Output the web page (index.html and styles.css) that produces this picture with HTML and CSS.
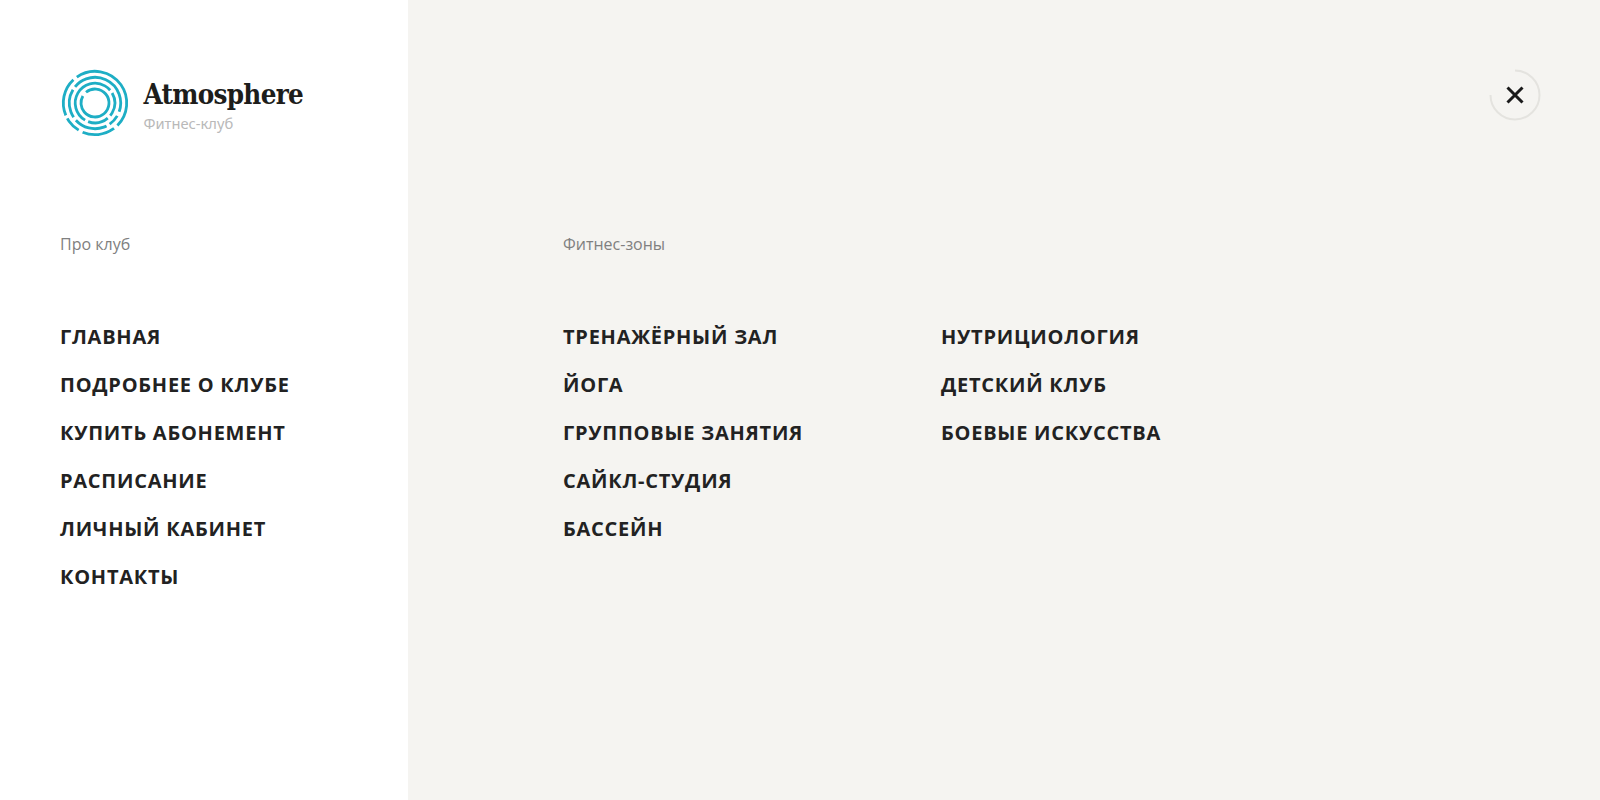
FILE: index.html
```html
<!DOCTYPE html>
<html lang="ru">
<head>
<meta charset="utf-8">
<title>Atmosphere</title>
<link rel="stylesheet" href="styles.css">
</head>
<body>
<div class="page">
  <aside class="side">
    <a class="logo">
      <svg class="logo-mark" width="70" height="70" viewBox="0 0 70 70" fill="none" stroke="#1eaec5" stroke-width="2.8">
        <circle cx="35" cy="35" r="31.7" pathLength="360" stroke-dasharray="170 8 60 8 30 6 70 8" transform="rotate(235 35 35)"/>
        <circle cx="35" cy="35" r="25.7" pathLength="360" stroke-dasharray="130 10 25 8 75 8 65 8 31 0" transform="rotate(250 35 35)"/>
        <circle cx="35" cy="35" r="19.8" pathLength="360" stroke-dasharray="110 10 70 10 60 10 90 0" transform="rotate(210 35 35)"/>
        <circle cx="35" cy="35" r="14" pathLength="360" stroke-dasharray="340 20" transform="rotate(230 35 35)"/>
      </svg>
      <span class="logo-text">
        <span class="logo-name">Atmosphere</span>
        <span class="logo-sub">Фитнес-клуб</span>
      </span>
    </a>
    <nav class="menu">
      <h2 class="menu-title">Про клуб</h2>
      <ul class="menu-list">
        <li>ГЛАВНАЯ</li>
        <li>ПОДРОБНЕЕ О КЛУБЕ</li>
        <li>КУПИТЬ АБОНЕМЕНТ</li>
        <li>РАСПИСАНИЕ</li>
        <li>ЛИЧНЫЙ КАБИНЕТ</li>
        <li>КОНТАКТЫ</li>
      </ul>
    </nav>
  </aside>
  <main class="main">
    <div class="topbar">
      <button class="close" aria-label="Закрыть">
        <svg width="54" height="54" viewBox="0 0 54 54" fill="none">
          <path d="M2.5 27A24.5 24.5 0 1 0 27 2.5" stroke="#e4e3df" stroke-width="2"/>
          <path d="M19.5 19.5L34.5 34.5M34.5 19.5L19.5 34.5" stroke="#1a1a1a" stroke-width="3"/>
        </svg>
      </button>
    </div>
    <nav class="menu">
      <h2 class="menu-title">Фитнес-зоны</h2>
      <div class="zones">
        <ul class="menu-list">
          <li>ТРЕНАЖЁРНЫЙ ЗАЛ</li>
          <li>ЙОГА</li>
          <li>ГРУППОВЫЕ ЗАНЯТИЯ</li>
          <li>САЙКЛ-СТУДИЯ</li>
          <li>БАССЕЙН</li>
        </ul>
        <ul class="menu-list">
          <li>НУТРИЦИОЛОГИЯ</li>
          <li>ДЕТСКИЙ КЛУБ</li>
          <li>БОЕВЫЕ ИСКУССТВА</li>
        </ul>
      </div>
    </nav>
  </main>
</div>
</body>
</html>
```

FILE: styles.css
```css
* { box-sizing: border-box; }
html, body { margin: 0; padding: 0; }
body { font-family: "Open Sans", sans-serif; background: #fff; color: #222; }
.page { display: flex; width: 1600px; height: 800px; overflow: hidden; }
.side { width: 408px; flex: none; padding: 68px 0 0 60px; background: #fff; }
.main { flex: 1; padding: 68px 60px 0 155px; background: #f5f4f1; }
.logo { display: flex; align-items: flex-start; height: 164px; }
.logo-mark { flex: none; margin-right: 13.5px; }
.logo-text { display: flex; flex-direction: column; padding-top: 7px; }
.logo-name { font-family: "DejaVu Serif", serif; font-weight: 700; font-stretch: condensed; font-size: 27.5px; line-height: 38px; color: #1d1d1b; letter-spacing: -0.7px; }
.logo-sub { font-family: "Noto Sans", sans-serif; font-size: 14.7px; line-height: 20px; color: #b9b9b9; }
.topbar { display: flex; justify-content: flex-end; height: 164px; }
.close { width: 54px; height: 54px; padding: 0; border: 0; background: none; margin-right: -2px; }
.close svg { display: block; }
.menu-title { margin: 0; font-weight: 400; font-size: 16px; line-height: 24px; color: #808080; }
.menu-list { list-style: none; margin: 0; padding: 0; }
.menu > .menu-list, .zones { margin-top: 57px; }
.menu-list li { font-size: 20px; line-height: 48px; font-weight: 700; letter-spacing: 0.75px; color: #222; white-space: nowrap; }
.zones { display: grid; grid-template-columns: 378px 1fr; }
```
